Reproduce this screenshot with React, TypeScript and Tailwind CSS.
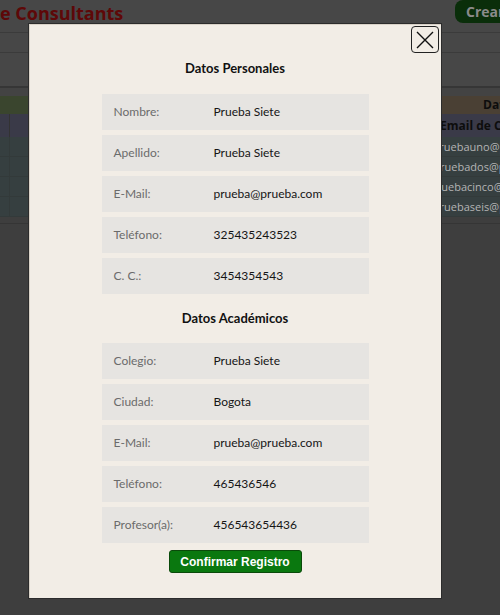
import React from "react";

const personal: [string, string][] = [
  ["Nombre:", "Prueba Siete"],
  ["Apellido:", "Prueba Siete"],
  ["E-Mail:", "prueba@prueba.com"],
  ["Teléfono:", "325435243523"],
  ["C. C.:", "3454354543"],
];

const academic: [string, string][] = [
  ["Colegio:", "Prueba Siete"],
  ["Ciudad:", "Bogota"],
  ["E-Mail:", "prueba@prueba.com"],
  ["Teléfono:", "465436546"],
  ["Profesor(a):", "456543654436"],
];

const emails = [
  "pruebauno@prueba.com",
  "pruebados@prueba.com",
  "pruebacinco@prueba.com",
  "pruebaseis@prueba.com",
];

function Rows({ data }: { data: [string, string][] }) {
  return (
    <div className="flex flex-col gap-[5px] w-[267px]">
      {data.map(([l, v], i) => (
        <div key={i} className="h-[36px] bg-[#e6e4e1] flex items-center pl-[12px] text-[12px]">
          <span className="w-[100px] text-[#6b6b6b]">{l}</span>
          <span className="text-[#151515]">{v}</span>
        </div>
      ))}
    </div>
  );
}

export default function App() {
  return (
    <div
      className="relative w-[500px] h-[615px] overflow-hidden bg-[#3e3e3e]"
      style={{ fontFamily: '"Open Sans", "Noto Sans", sans-serif' }}
    >
      {/* background page (dimmed) */}
      <div className="w-[564px]">
        <div className="h-[33px] bg-[#474747] border-b border-[#3b3b3b] flex items-start">
          <div className="text-[18px] font-bold text-[#5e0808] leading-[24px] mt-[1px]">e Consultants</div>
          <div className="ml-auto mr-[9px] h-[23px] rounded-[8px] bg-[#0a2e0a] pl-[11px] text-[14px] font-bold text-[#8a8a8a] leading-[23px] w-[100px]">
            Crear
          </div>
        </div>
        <div className="h-[20px] bg-[#474747] border-b border-[#3b3b3b]" />
        <div className="h-[35px] bg-[#474747] border-b-2 border-[#363636]" />
        <div className="h-[8px] bg-[#434343]" />
        <div className="grid grid-cols-[10px_420px_134px] text-[11px]">
          <div className="col-span-2 h-[18px] bg-[#3a452e]" />
          <div className="h-[18px] bg-[#4a4034] text-[12px] font-bold text-[#0d0d0d] leading-[18px] pl-[53px] whitespace-nowrap">
            Datos de Contacto
          </div>
          <div className="h-[23px] bg-[#3a3a48] border-r border-[#333]" />
          <div className="h-[23px] bg-[#3a3a48]" />
          <div className="h-[23px] bg-[#3a3a48] text-[12px] font-bold text-[#0d0d0d] leading-[23px] pl-[10px] whitespace-nowrap">
            Email de Contacto
          </div>
          {emails.map((e, i) => (
            <React.Fragment key={i}>
              <div className="h-[20px] bg-[#363f40] border-b border-r border-[#333a3a]" />
              <div className="h-[20px] bg-[#363f40] border-b border-[#333a3a]" />
              <div className="h-[20px] bg-[#363f40] border-b border-[#333a3a] text-center text-[#b4b4b4] leading-[19px] whitespace-nowrap">
                {e}
              </div>
            </React.Fragment>
          ))}
        </div>
        <div className="h-[7px] bg-[#3e3e3e] border-b border-[#353535]" />
      </div>

      {/* modal */}
      <div
        className="absolute left-[28px] top-[23px] w-[414px] h-[576px] border border-[#2c2c2c] bg-[#f2ede6] flex flex-col items-center pt-[35px] shadow-[inset_1px_1px_0_#d9d2c8]"
        style={{ fontFamily: 'Lato, "Open Sans", sans-serif' }}
      >
        <button className="absolute right-[2px] top-[2px] w-[28px] h-[27px] rounded-[4px] border border-[#222] bg-[#f2ede6] flex items-center justify-center">
          <svg width="20" height="20" viewBox="0 0 20 20">
            <path d="M2 2 L18 18 M18 2 L2 18" stroke="#111" strokeWidth="1.4" fill="none" />
          </svg>
        </button>
        <div className="text-[13px] font-bold text-[#111] leading-[18px]">Datos Personales</div>
        <div className="mt-[17px]">
          <Rows data={personal} />
        </div>
        <div className="mt-[15px] text-[13px] font-bold text-[#111] leading-[18px]">Datos Académicos</div>
        <div className="mt-[16px]">
          <Rows data={academic} />
        </div>
        <button
          className="mt-[7px] w-[133px] h-[23px] rounded-[3px] bg-[#0a780f] border border-[#0a4a0a] text-white text-[12px] font-bold"
          style={{ fontFamily: '"Liberation Sans", Arial, sans-serif' }}
        >
          Confirmar Registro
        </button>
      </div>
    </div>
  );
}
